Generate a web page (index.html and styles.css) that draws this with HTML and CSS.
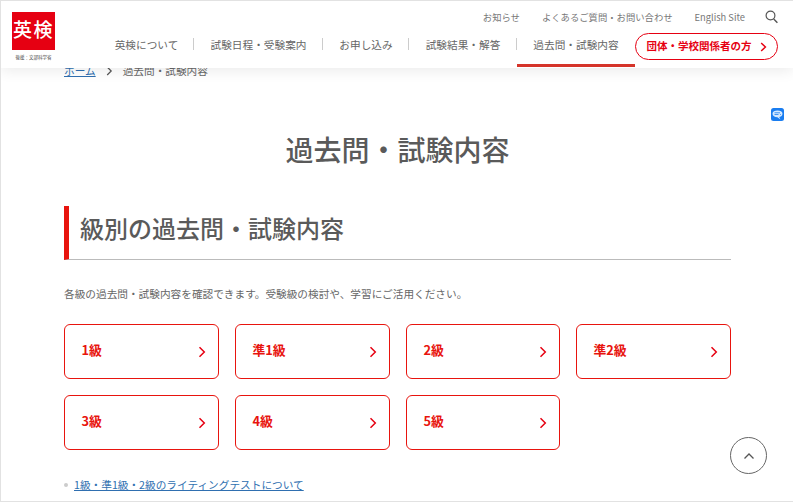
FILE: index.html
```html
<!DOCTYPE html>
<html lang="ja">
<head>
<meta charset="utf-8">
<title>過去問・試験内容</title>
<link rel="stylesheet" href="styles.css">
</head>
<body>
<div class="frame">
  <header class="header">
    <a class="logo">
      <span class="logo-box">英検</span>
      <span class="logo-sub">後援：文部科学省</span>
    </a>
    <div class="header-right">
      <div class="util">
        <a>お知らせ</a>
        <a>よくあるご質問・お問い合わせ</a>
        <a>English Site</a>
        <svg class="search" width="13" height="14" viewBox="0 0 13 14"><circle cx="5.5" cy="5.5" r="4.4" fill="none" stroke="#555" stroke-width="1.2"/><path d="M8.7 8.9L12.4 12.8" stroke="#555" stroke-width="1.4" fill="none"/></svg>
      </div>
      <nav class="nav">
        <a class="nav-item w1">英検について</a>
        <a class="nav-item w2">試験日程・受験案内</a>
        <a class="nav-item w3">お申し込み</a>
        <a class="nav-item w4">試験結果・解答</a>
        <a class="nav-item w5 active">過去問・試験内容</a>
        <a class="cta">団体・学校関係者の方<svg width="7" height="10" viewBox="0 0 7 10"><path d="M1.2 1L5.4 5L1.2 9" fill="none" stroke="#e60012" stroke-width="1.5"/></svg></a>
      </nav>
    </div>
  </header>

  <main class="main">
    <div class="crumbs">
      <a class="link">ホーム</a>
      <svg width="7" height="10" viewBox="0 0 7 10"><path d="M1.2 1L5.2 5L1.2 9" fill="none" stroke="#555" stroke-width="1.2"/></svg>
      <span>過去問・試験内容</span>
    </div>
    <h1 class="title">過去問・試験内容</h1>
    <h2 class="section">級別の過去問・試験内容</h2>
    <p class="lead">各級の過去問・試験内容を確認できます。受験級の検討や、学習にご活用ください。</p>
    <div class="grid">
      <a class="card">1級<svg width="8" height="12" viewBox="0 0 8 12"><path d="M1.5 1.2L6.3 6L1.5 10.8" fill="none" stroke="#e60012" stroke-width="1.5"/></svg></a>
      <a class="card">準1級<svg width="8" height="12" viewBox="0 0 8 12"><path d="M1.5 1.2L6.3 6L1.5 10.8" fill="none" stroke="#e60012" stroke-width="1.5"/></svg></a>
      <a class="card">2級<svg width="8" height="12" viewBox="0 0 8 12"><path d="M1.5 1.2L6.3 6L1.5 10.8" fill="none" stroke="#e60012" stroke-width="1.5"/></svg></a>
      <a class="card">準2級<svg width="8" height="12" viewBox="0 0 8 12"><path d="M1.5 1.2L6.3 6L1.5 10.8" fill="none" stroke="#e60012" stroke-width="1.5"/></svg></a>
      <a class="card">3級<svg width="8" height="12" viewBox="0 0 8 12"><path d="M1.5 1.2L6.3 6L1.5 10.8" fill="none" stroke="#e60012" stroke-width="1.5"/></svg></a>
      <a class="card">4級<svg width="8" height="12" viewBox="0 0 8 12"><path d="M1.5 1.2L6.3 6L1.5 10.8" fill="none" stroke="#e60012" stroke-width="1.5"/></svg></a>
      <a class="card">5級<svg width="8" height="12" viewBox="0 0 8 12"><path d="M1.5 1.2L6.3 6L1.5 10.8" fill="none" stroke="#e60012" stroke-width="1.5"/></svg></a>
    </div>
    <ul class="notes">
      <li><a class="link">1級・準1級・2級のライティングテストについて</a></li>
    </ul>
  </main>

  <div class="side-badge">
    <svg width="13" height="13" viewBox="0 0 13 13"><rect width="13" height="13" rx="2.5" fill="#1a7df0"/><path d="M1.500 5.800C1.500 3.600 3.700 2.500 6.500 2.500S11.500 3.600 11.500 5.800 9.300 9 8.200 9L9.500 11.500 6.400 9.200C3.700 9.200 1.500 8 1.500 5.800Z" fill="#d5e9ff"/><path d="M3.500 4.800H9M3.500 6.500H7.500M9 6.500H9.800" stroke="#1a7df0" stroke-width=".8"/></svg>
  </div>
  <a class="to-top">
    <svg width="12" height="8" viewBox="0 0 12 8"><path d="M1.5 6.5L6 2L10.500 6.500" fill="none" stroke="#555" stroke-width="1.300"/></svg>
  </a>
</div>
</body>
</html>
```

FILE: styles.css
```css
* { box-sizing: border-box; }
html, body { margin: 0; padding: 0; }
body {
  width: 793px;
  height: 502px;
  overflow: hidden;
  background: #fff;
  color: #555;
  font-family: "Noto Sans CJK JP", "Noto Sans", sans-serif;
}
.frame {
  position: relative;
  width: 793px;
  height: 502px;
  overflow: hidden;
  border-top: 1px solid #e2e2e2;
  border-left: 1px solid #e2e2e2;
  border-bottom: 1px solid #e2e2e2;
}
.header {
  position: absolute;
  z-index: 2;
  top: 0;
  left: 0;
  right: 0;
  height: 67px;
  background: #fff;
  box-shadow: 0 2px 14px rgba(0, 0, 0, .09);
  display: flex;
  justify-content: space-between;
  padding: 11px 15px 0 11px;
}
.logo { display: flex; flex-direction: column; align-items: center; width: 43px; }
.logo-box {
  width: 43px;
  height: 38px;
  background: #e60012;
  color: #fff;
  font-size: 19px;
  font-weight: 500;
  line-height: 33px;
  text-align: center;
  letter-spacing: 1.500px;
  white-space: nowrap;
}
.logo-sub { font-size: 4.500px; line-height: 8px; margin-top: 3px; color: #444; white-space: nowrap; }
.header-right { display: flex; flex-direction: column; align-items: flex-end; }
.util {
  display: flex;
  align-items: center;
  height: 14px;
  margin-top: -2px;
  font-size: 9.330px;
  color: #777;
  gap: 22px;
  line-height: 14px;
}
.search { margin-left: -2px; }
.nav { display: flex; align-items: flex-start; margin-top: 10px; height: 44px; }
.nav-item {
  position: relative;
  display: block;
  height: 44px;
  padding-top: 3px;
  font-size: 10.670px;
  line-height: 16px;
  color: #666;
  text-align: center;
  white-space: nowrap;
}
.w1 { width: 95px; }
.w2 { width: 129px; }
.w3 { width: 86px; }
.w4 { width: 108px; }
.w5 { width: 118px; }
.nav-item:not(.active)::after {
  content: "";
  position: absolute;
  right: 0;
  top: 4px;
  height: 12px;
  border-right: 1px solid #ccc;
}
.active::before {
  content: "";
  position: absolute;
  left: 0;
  right: 0;
  top: 30px;
  height: 3px;
  background: #d5342a;
}
.cta {
  display: flex;
  align-items: center;
  justify-content: center;
  gap: 8px;
  width: 143px;
  height: 27px;
  margin-top: -1px;
  padding-bottom: 2px;
  border: 1px solid #e60012;
  border-radius: 14px;
  color: #e60012;
  font-size: 10.500px;
  font-weight: 700;
  white-space: nowrap;
  background: #fff;
}
.cta svg { margin-top: 2px; }
.main { width: 730px; padding: 0 0 0 63px; }
.crumbs {
  display: flex;
  align-items: center;
  gap: 10px;
  padding-top: 61px;
  height: 78px;
  font-size: 10.670px;
  line-height: 16px;
  color: #666;
}
.link { color: #2f6fb0; text-decoration: underline; }
.title {
  margin: 0;
  padding-top: 49px;
  height: 127px;
  font-size: 28px;
  font-weight: 500;
  line-height: 42px;
  text-align: center;
  color: #5a5a5a;
}
.section {
  margin: 0;
  height: 54px;
  padding: 5px 0 0 11px;
  border-left: 5px solid #e8140e;
  border-bottom: 1px solid #bbb;
  font-size: 24px;
  font-weight: 500;
  line-height: 34px;
  color: #5a5a5a;
}
.lead { margin: 25px 0 0; font-size: 10.670px; line-height: 17px; color: #666; white-space: nowrap; }
.grid {
  display: grid;
  grid-template-columns: 155px 155px 154px 155px;
  grid-auto-rows: 55px;
  gap: 16px;
  margin-top: 22px;
}
.card {
  display: flex;
  justify-content: space-between;
  align-items: center;
  padding: 0 12px 4px 16.500px;
  border: 1px solid #e8140e;
  border-radius: 6px;
  color: #e8140e;
  font-size: 12.800px;
  font-weight: 700;
}
.card svg { margin-top: 4px; }
.notes { list-style: none; margin: 23px 0 0; padding: 0; font-size: 10.670px; line-height: 24px; }
.notes li { display: flex; align-items: center; gap: 6px; }
.notes li::before {
  content: "";
  width: 4px;
  height: 4px;
  border-radius: 50%;
  background: #ccc;
}
.side-badge { position: absolute; top: 107px; left: 770px; width: 13px; height: 13px; line-height: 0; }
.to-top {
  position: absolute;
  top: 436px;
  left: 729px;
  width: 37px;
  height: 37px;
  display: flex;
  align-items: center;
  justify-content: center;
  border: 1px solid #666;
  border-radius: 50%;
  background: #fff;
}
```
